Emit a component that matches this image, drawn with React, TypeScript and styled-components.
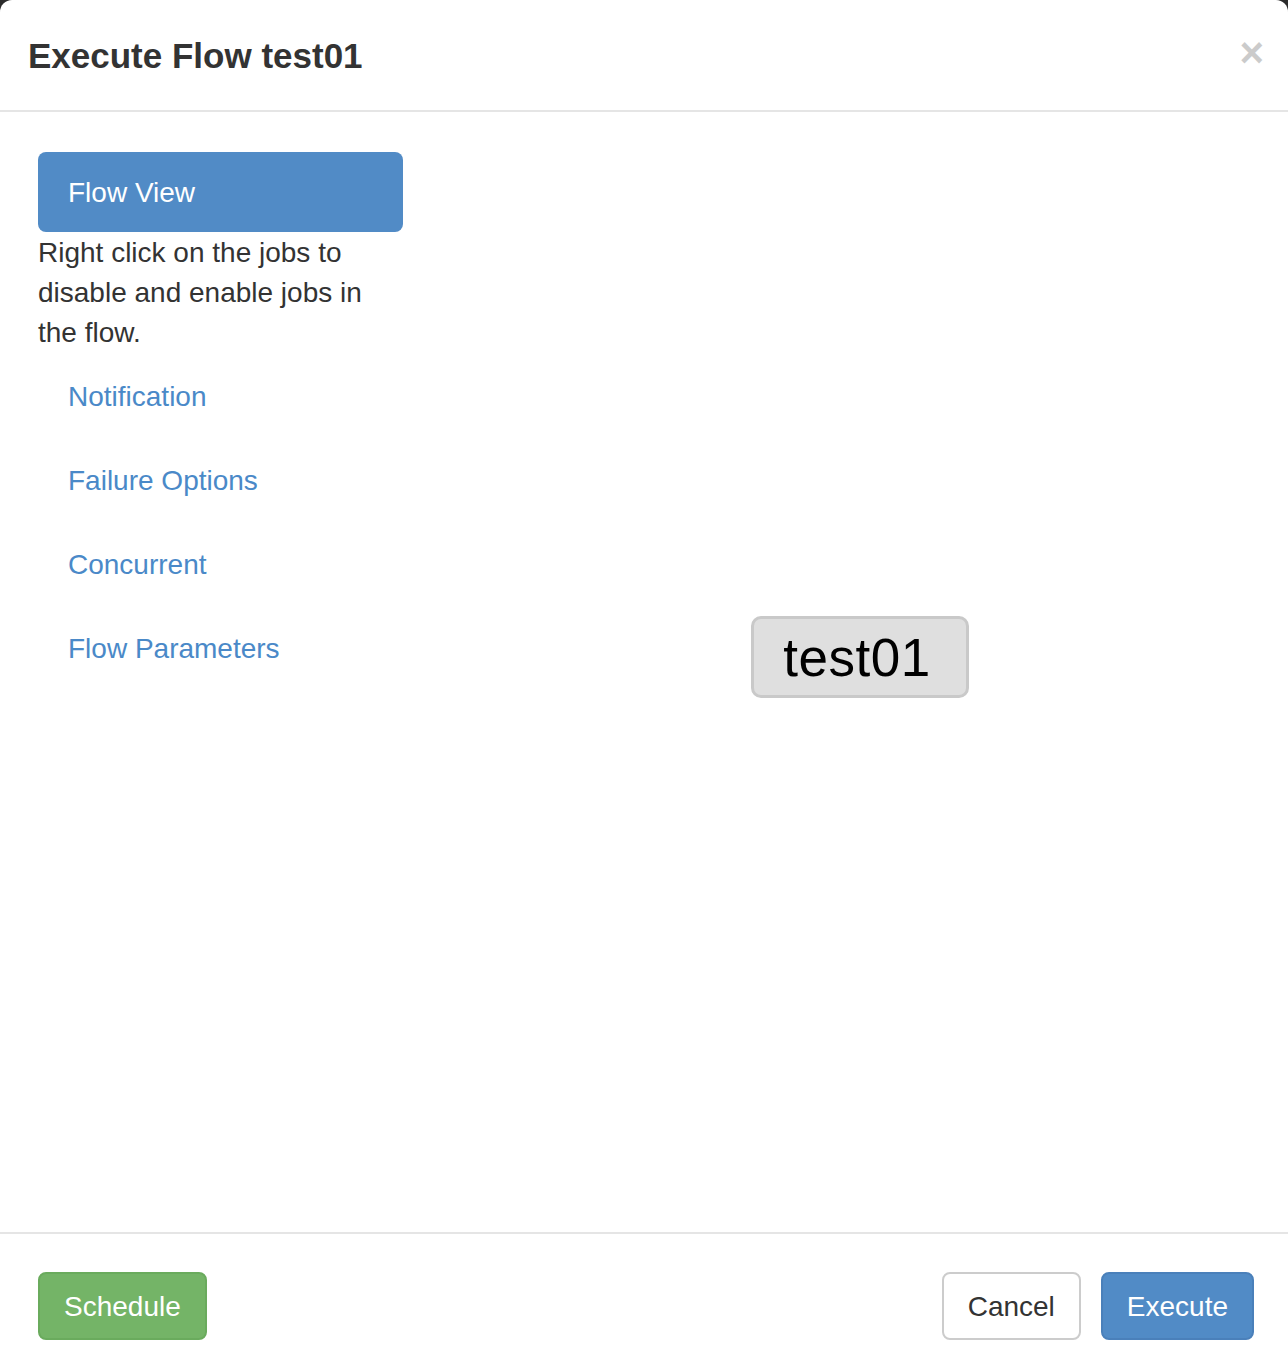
import { FunctionComponent } from "react";
import styled, { createGlobalStyle } from "styled-components";

const colors = {
  text: "#333333",
  link: "#4a89c8",
  primary: "#518bc6",
  primaryBorder: "#4a80ba",
  success: "#74b467",
  successBorder: "#6aab5d",
  rule: "#e5e5e5",
};

const GlobalStyle = createGlobalStyle`
  html, body {
    margin: 0;
    padding: 0;
    background: #2b2b2b;
  }
  body {
    font-family: "Liberation Sans", Arial, Helvetica, sans-serif;
    color: ${colors.text};
  }
  * {
    box-sizing: border-box;
  }
`;

const Modal = styled.div`
  width: 1288px;
  min-height: 1370px;
  background: #fff;
  border-radius: 12px 12px 0 0;
  display: flex;
  flex-direction: column;
`;

const Header = styled.div`
  display: flex;
  align-items: center;
  justify-content: space-between;
  padding: 30px 24px 29px 28px;
  border-bottom: 2px solid ${colors.rule};
`;

const Title = styled.h4`
  margin: 0;
  font-size: 35px;
  line-height: 51px;
  font-weight: bold;
  color: ${colors.text};
`;

const Close = styled.button`
  border: 0;
  background: none;
  padding: 0;
  margin-top: -6px;
  font-family: "Liberation Sans", Arial, sans-serif;
  font-size: 42px;
  line-height: 1;
  font-weight: bold;
  color: #000;
  opacity: 0.2;
  cursor: pointer;
`;

const Body = styled.div`
  height: 1120px;
  display: flex;
  padding: 40px 0 0 38px;
`;

const Sidebar = styled.div`
  width: 365px;
  flex: none;
  display: flex;
  flex-direction: column;
`;

const Pill = styled.a<{ $active?: boolean }>`
  display: block;
  padding: 21px 30px 19px;
  margin-top: ${({ $active }) => ($active ? "0" : "4px")};
  border-radius: 8px;
  font-size: 28px;
  line-height: 40px;
  text-decoration: none;
  color: ${({ $active }) => ($active ? "#fff" : colors.link)};
  background: ${({ $active }) => ($active ? colors.primary : "transparent")};
`;

const Hint = styled.p`
  margin: 0;
  padding-top: 1px;
  margin-bottom: -1px;
  font-size: 28px;
  line-height: 40px;
  color: ${colors.text};
`;

const Canvas = styled.div`
  position: relative;
  flex: 1;
`;

const Node = styled.div`
  position: absolute;
  left: 348px;
  top: 464px;
  width: 218px;
  height: 82px;
  border: 3px solid #c9c9c9;
  border-radius: 10px;
  background: #dfdfdf;
  display: flex;
  align-items: center;
  justify-content: center;
  padding-right: 6px;
  font-size: 53px;
  letter-spacing: 0.5px;
  color: #000;
`;

const Footer = styled.div`
  display: flex;
  justify-content: space-between;
  align-items: center;
  border-top: 2px solid ${colors.rule};
  padding: 38px 34px 30px 38px;
`;

const Group = styled.div`
  display: flex;
  gap: 20px;
`;

type Variant = "success" | "primary" | "default";

const Button = styled.button<{ $variant: Variant }>`
  font-family: "Liberation Sans", Arial, sans-serif;
  font-size: 28px;
  line-height: 40px;
  padding: 13px 24px 11px;
  border-radius: 8px;
  border: 2px solid
    ${({ $variant }) =>
      $variant === "success"
        ? colors.successBorder
        : $variant === "primary"
        ? colors.primaryBorder
        : "#cccccc"};
  background: ${({ $variant }) =>
    $variant === "success"
      ? colors.success
      : $variant === "primary"
      ? colors.primary
      : "#fff"};
  color: ${({ $variant }) => ($variant === "default" ? colors.text : "#fff")};
  cursor: pointer;
`;

const sections = ["Notification", "Failure Options", "Concurrent", "Flow Parameters"];

const App: FunctionComponent = () => {
  return (
    <>
      <GlobalStyle />
      <Modal>
        <Header>
          <Title>Execute Flow test01</Title>
          <Close aria-label="Close">×</Close>
        </Header>
        <Body>
          <Sidebar>
            <Pill $active href="#">Flow View</Pill>
            <Hint>Right click on the jobs to disable and enable jobs in the flow.</Hint>
            {sections.map((s) => (
              <Pill key={s} href="#">{s}</Pill>
            ))}
          </Sidebar>
          <Canvas>
            <Node>test01</Node>
          </Canvas>
        </Body>
        <Footer>
          <Button $variant="success">Schedule</Button>
          <Group>
            <Button $variant="default">Cancel</Button>
            <Button $variant="primary">Execute</Button>
          </Group>
        </Footer>
      </Modal>
    </>
  );
};

export default App;
